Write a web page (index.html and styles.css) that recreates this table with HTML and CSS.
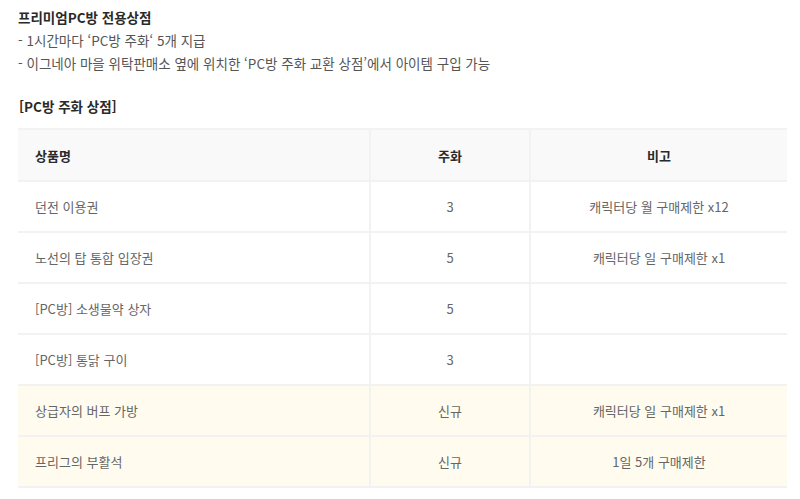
FILE: index.html
```html
<!DOCTYPE html>
<html lang="ko">
<head>
<meta charset="utf-8">
<link rel="stylesheet" href="styles.css">
</head>
<body>
<div class="page">
  <div class="intro">
    <p class="title">프리미엄PC방 전용상점</p>
    <p class="line">- 1시간마다 ‘PC방 주화‘ 5개 지급</p>
    <p class="line">- 이그네아 마을 위탁판매소 옆에 위치한 ‘PC방 주화 교환 상점’에서 아이템 구입 가능</p>
  </div>
  <p class="subtitle">[PC방 주화 상점]</p>
  <table class="shop">
    <thead>
      <tr><th class="c-name">상품명</th><th class="c-coin">주화</th><th class="c-note">비고</th></tr>
    </thead>
    <tbody>
      <tr><td class="c-name">던전 이용권</td><td class="c-coin">3</td><td class="c-note">캐릭터당 월 구매제한 x12</td></tr>
      <tr><td class="c-name">노선의 탑 통합 입장권</td><td class="c-coin">5</td><td class="c-note">캐릭터당 일 구매제한 x1</td></tr>
      <tr><td class="c-name">[PC방] 소생물약 상자</td><td class="c-coin">5</td><td class="c-note"></td></tr>
      <tr><td class="c-name">[PC방] 통닭 구이</td><td class="c-coin">3</td><td class="c-note"></td></tr>
      <tr class="new"><td class="c-name">상급자의 버프 가방</td><td class="c-coin">신규</td><td class="c-note">캐릭터당 일 구매제한 x1</td></tr>
      <tr class="new"><td class="c-name">프리그의 부활석</td><td class="c-coin">신규</td><td class="c-note">1일 5개 구매제한</td></tr>
    </tbody>
  </table>
</div>
</body>
</html>
```

FILE: styles.css
```css
html, body {
  margin: 0;
  padding: 0;
  background: #fff;
}
body {
  font-family: "Noto Sans CJK KR", "Noto Sans", sans-serif;
  font-size: 13px;
  color: #555;
}
.page {
  padding: 6px 13px 0 18px;
}
.intro p {
  margin: 0;
  line-height: 23px;
  font-size: 13.5px;
}
.title {
  font-weight: bold;
  color: #2a2a2a;
}
.line {
  color: #555;
}
.subtitle {
  margin: 22px 0 13px 1px;
  font-weight: bold;
  color: #2a2a2a;
  line-height: 18px;
  font-size: 13.5px;
}
.shop {
  width: 769px;
  border-collapse: collapse;
  table-layout: fixed;
}
.shop th, .shop td {
  border-top: 2px solid #f2f2f2;
  border-bottom: 2px solid #f2f2f2;
  padding: 0;
}
.shop th {
  height: 50px;
  background: #f9f9f9;
  color: #2a2a2a;
  font-weight: bold;
}
.shop td {
  height: 49px;
  color: #666;
}
.shop .c-name {
  width: 352px;
  text-align: left;
  padding-left: 17px;
  box-sizing: border-box;
}
.shop .c-coin {
  width: 158px;
  text-align: center;
  border-left: 2px solid #f2f2f2;
  border-right: 2px solid #f2f2f2;
}
.shop .c-note {
  text-align: center;
}
.shop tr.new td {
  background: #fffcef;
}
```
